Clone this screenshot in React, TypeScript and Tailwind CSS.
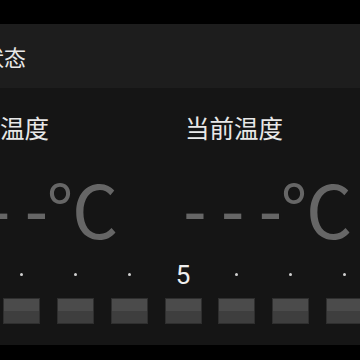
const cjk = "font-['Noto_Sans_CJK_SC','Noto_Sans',sans-serif]";
const num = "font-['Roboto','Noto_Sans_CJK_SC',sans-serif]";

const ticks = [".", ".", ".", "5", ".", ".", "."];

function TempColumn({ label }: { label: string }) {
  return (
    <div className="w-[234px] shrink-0">
      <div className={`${cjk} text-[24.5px] leading-none text-[#e8e8e8]`}>{label}</div>
      <div className={`${num} mt-[37px] whitespace-pre text-[72px] leading-none text-[#666666]`}>
        - - -℃
      </div>
    </div>
  );
}

export default function App() {
  return (
    <div className="h-[360px] w-[360px] overflow-hidden bg-black pt-6">
      <div className="flex h-16 items-center bg-[#1d1d1d]">
        <span className={`${cjk} ml-[-18px] whitespace-nowrap text-[22px] text-[#e8e8e8]`}>
          状态
        </span>
      </div>

      <div className="h-[257px] bg-[#151515] pt-[28px]">
        <div className="ml-[-49px] flex">
          <TempColumn label="设定温度" />
          <TempColumn label="当前温度" />
        </div>

        <div className="ml-[-5px] mt-[12px] flex">
          {ticks.map((t, i) => (
            <div key={i} className="flex w-[53.75px] shrink-0 flex-col items-center">
              <div className="flex h-[26px] items-center justify-center">
                {t === "." ? (
                  <div className="h-[3px] w-[3px] rounded-full bg-[#d0d0d0]" />
                ) : (
                  <span className={`${num} text-[26px] leading-none text-[#eeeeee]`}>{t}</span>
                )}
              </div>
              <div className="mt-[10px] h-[26px] w-[37px] border border-[#2f2f2f] bg-[linear-gradient(to_bottom,#4b4b4b_50%,#3e3e3e_50%)]" />
            </div>
          ))}
        </div>
      </div>
    </div>
  );
}
